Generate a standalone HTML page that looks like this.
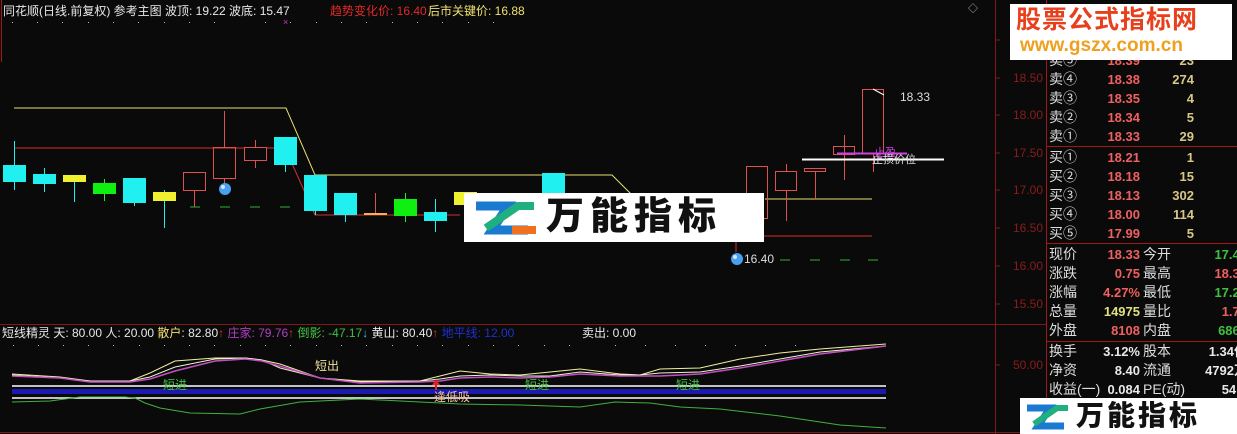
<!DOCTYPE html><html><head><meta charset="utf-8"><style>
body{margin:0;width:1237px;height:434px;background:#0a0a0a;overflow:hidden;position:relative;font-family:"Liberation Sans","Noto Sans CJK SC",sans-serif;}
.t{position:absolute;white-space:nowrap;font-size:12px;line-height:14px}
.rp{position:absolute;left:1049px;font-size:14px;line-height:19px;white-space:nowrap;color:#ddd;font-family:"Liberation Sans","Noto Sans CJK SC",sans-serif}
.r{position:absolute;text-align:right;font-weight:bold;font-size:13px}
</style></head><body>
<svg width="1237" height="434" style="position:absolute;left:0;top:0" font-family="Liberation Sans, Noto Sans CJK SC, sans-serif">
<!-- frame lines -->
<line x1="1.5" y1="0" x2="1.5" y2="62" stroke="#a01818"/>
<line x1="995.5" y1="0" x2="995.5" y2="434" stroke="#801818"/>
<line x1="1046.5" y1="0" x2="1046.5" y2="434" stroke="#a01818"/>
<line x1="0" y1="324.5" x2="1047" y2="324.5" stroke="#801818"/>
<line x1="0" y1="432.5" x2="1047" y2="432.5" stroke="#801818"/>
<line x1="1047" y1="146.5" x2="1237" y2="146.5" stroke="#a01818"/>
<line x1="1047" y1="243.5" x2="1237" y2="243.5" stroke="#a01818"/>
<line x1="1047" y1="341.5" x2="1237" y2="341.5" stroke="#a01818"/>
<g stroke="#801818"><line x1="995" y1="40" x2="1000" y2="40"/><line x1="995" y1="78" x2="1000" y2="78"/><line x1="995" y1="115" x2="1000" y2="115"/><line x1="995" y1="153" x2="1000" y2="153"/><line x1="995" y1="190" x2="1000" y2="190"/><line x1="995" y1="228" x2="1000" y2="228"/><line x1="995" y1="266" x2="1000" y2="266"/><line x1="995" y1="304" x2="1000" y2="304"/><line x1="995" y1="365" x2="1000" y2="365"/></g>
<g fill="#8a1c1c" font-size="12"><text x="1013" y="82">18.50</text><text x="1013" y="119">18.00</text><text x="1013" y="157">17.50</text><text x="1013" y="194">17.00</text><text x="1013" y="232">16.50</text><text x="1013" y="270">16.00</text><text x="1013" y="308">15.50</text><text x="1013" y="369">50.00</text></g>
<!-- dots -->
<g fill="#bbb"><rect x="12" y="22" width="1" height="1"/><rect x="37" y="22" width="1" height="1"/><rect x="62" y="22" width="1" height="1"/><rect x="88" y="22" width="1" height="1"/><rect x="113" y="22" width="1" height="1"/><rect x="138" y="22" width="1" height="1"/><rect x="164" y="22" width="1" height="1"/><rect x="189" y="22" width="1" height="1"/><rect x="214" y="22" width="1" height="1"/><rect x="265" y="22" width="1" height="1"/><rect x="290" y="22" width="1" height="1"/><rect x="316" y="22" width="1" height="1"/><rect x="341" y="22" width="1" height="1"/><rect x="366" y="22" width="1" height="1"/><rect x="392" y="22" width="1" height="1"/><rect x="417" y="22" width="1" height="1"/><rect x="442" y="22" width="1" height="1"/><rect x="468" y="22" width="1" height="1"/><rect x="493" y="22" width="1" height="1"/>
<rect x="13" y="345" width="1" height="1"/><rect x="38" y="345" width="1" height="1"/><rect x="63" y="345" width="1" height="1"/><rect x="88" y="345" width="1" height="1"/><rect x="113" y="345" width="1" height="1"/><rect x="139" y="345" width="1" height="1"/><rect x="164" y="345" width="1" height="1"/><rect x="189" y="345" width="1" height="1"/><rect x="214" y="345" width="1" height="1"/><rect x="240" y="345" width="1" height="1"/><rect x="265" y="345" width="1" height="1"/><rect x="290" y="345" width="1" height="1"/><rect x="316" y="345" width="1" height="1"/><rect x="341" y="345" width="1" height="1"/><rect x="366" y="345" width="1" height="1"/><rect x="392" y="345" width="1" height="1"/><rect x="417" y="345" width="1" height="1"/><rect x="442" y="345" width="1" height="1"/><rect x="468" y="345" width="1" height="1"/><rect x="493" y="345" width="1" height="1"/><rect x="518" y="345" width="1" height="1"/><rect x="544" y="345" width="1" height="1"/><rect x="569" y="345" width="1" height="1"/><rect x="615" y="345" width="1" height="1"/><rect x="645" y="345" width="1" height="1"/><rect x="675" y="345" width="1" height="1"/><rect x="705" y="345" width="1" height="1"/><rect x="735" y="345" width="1" height="1"/><rect x="765" y="345" width="1" height="1"/><rect x="795" y="345" width="1" height="1"/></g>
<text x="283" y="25" fill="#c040c0" font-size="9">×</text>
<!-- trend lines -->
<polyline points="14,108 286,108 315,175 612,175 632,195" fill="none" stroke="#e8e070"/>
<line x1="765" y1="199" x2="872" y2="199" stroke="#e8e070"/>
<polyline points="14,148 285,148 315,215 460,215" fill="none" stroke="#d03030"/>
<line x1="736" y1="236" x2="872" y2="236" stroke="#d03030"/>
<line x1="736" y1="230" x2="736" y2="252" stroke="#d03030"/>
<!-- green dashes -->
<g stroke="#30b030"><line x1="190" y1="207" x2="200" y2="207"/><line x1="220" y1="207" x2="230" y2="207"/><line x1="250" y1="207" x2="260" y2="207"/><line x1="280" y1="207" x2="290" y2="207"/><line x1="780" y1="260" x2="790" y2="260"/><line x1="810" y1="260" x2="820" y2="260"/><line x1="840" y1="260" x2="850" y2="260"/><line x1="868" y1="260" x2="878" y2="260"/></g>
<!-- candles -->
<g stroke-width="1">
<line x1="14.5" y1="141" x2="14.5" y2="190" stroke="#20f0f0"/><rect x="3" y="165" width="23" height="17" fill="#20f0f0"/>
<line x1="44.5" y1="168" x2="44.5" y2="192" stroke="#20f0f0"/><rect x="33" y="174" width="23" height="10" fill="#20f0f0"/>
<line x1="74.5" y1="175" x2="74.5" y2="202" stroke="#20f0f0"/><rect x="63" y="175" width="23" height="7" fill="#f0f030"/>
<line x1="104.5" y1="179" x2="104.5" y2="201" stroke="#20f020"/><rect x="93" y="183" width="23" height="11" fill="#10f010"/>
<line x1="134.5" y1="178" x2="134.5" y2="206" stroke="#20f0f0"/><rect x="123" y="178" width="23" height="25" fill="#20f0f0"/>
<line x1="164.5" y1="190" x2="164.5" y2="228" stroke="#20f0f0"/><rect x="153" y="192" width="23" height="9" fill="#f0f030"/>
<line x1="194.5" y1="190" x2="194.5" y2="207" stroke="#e05050"/><rect x="183.5" y="172.5" width="22" height="18" fill="none" stroke="#e05050"/>
<line x1="224.5" y1="111" x2="224.5" y2="147" stroke="#e05050"/><line x1="224.5" y1="179" x2="224.5" y2="185" stroke="#e05050"/><rect x="213.5" y="147.5" width="22" height="31" fill="none" stroke="#e05050"/>
<line x1="255.5" y1="140" x2="255.5" y2="168" stroke="#e05050"/><rect x="244.5" y="147.5" width="22" height="13" fill="#0a0a0a" stroke="#e05050"/>
<line x1="285.5" y1="165" x2="285.5" y2="172" stroke="#20f0f0"/><rect x="274" y="137" width="23" height="28" fill="#20f0f0"/>
<line x1="315.5" y1="175" x2="315.5" y2="215" stroke="#20f0f0"/><rect x="304" y="175" width="23" height="36" fill="#20f0f0"/>
<line x1="345.5" y1="193" x2="345.5" y2="222" stroke="#20f0f0"/><rect x="334" y="193" width="23" height="22" fill="#20f0f0"/>
<line x1="375.5" y1="193" x2="375.5" y2="214" stroke="#e05050"/><rect x="364" y="213" width="23" height="2" fill="#f0b060"/>
<line x1="405.5" y1="193" x2="405.5" y2="222" stroke="#20f020"/><rect x="394" y="199" width="23" height="17" fill="#10f010"/>
<line x1="435.5" y1="199" x2="435.5" y2="232" stroke="#20f0f0"/><rect x="424" y="212" width="23" height="9" fill="#20f0f0"/>
<rect x="454" y="192" width="23" height="13" fill="#f0f030"/>
<rect x="542" y="173" width="23" height="30" fill="#20f0f0"/>
<rect x="746.5" y="166.5" width="21" height="52" fill="none" stroke="#e05050"/>
<line x1="786.5" y1="164" x2="786.5" y2="221" stroke="#e05050"/><rect x="775.5" y="171.5" width="21" height="19" fill="#0a0a0a" stroke="#e05050"/>
<line x1="815.5" y1="171" x2="815.5" y2="199" stroke="#e05050"/><rect x="804.5" y="168.5" width="21" height="3" fill="none" stroke="#e05050"/>
<line x1="844.5" y1="135" x2="844.5" y2="180" stroke="#e05050"/><rect x="833.5" y="146.5" width="21" height="8" fill="none" stroke="#e05050"/>
<line x1="873.5" y1="153" x2="873.5" y2="172" stroke="#e05050"/><rect x="862.5" y="89.5" width="21" height="64" fill="none" stroke="#e05050"/>
</g>
<line x1="802" y1="159.5" x2="944" y2="159.5" stroke="#fff" stroke-width="2"/>
<line x1="837" y1="153.5" x2="907" y2="153.5" stroke="#d040e0" stroke-width="2"/>
<text x="874" y="156" fill="#d040e0" font-size="11">止盈</text>
<text x="872" y="163" fill="#ddd" font-size="11">止损价位</text>
<line x1="873" y1="89" x2="884" y2="95" stroke="#fff"/>
<text x="900" y="101" fill="#ddd" font-size="12">18.33</text>
<circle cx="225" cy="189" r="6" fill="#4aa0f0"/><circle cx="223" cy="187" r="2" fill="#cfe8ff"/>
<circle cx="737" cy="259" r="6" fill="#4aa0f0"/><circle cx="735" cy="257" r="2" fill="#cfe8ff"/>
<text x="744" y="263" fill="#ddd" font-size="12">16.40</text>
<!-- lower panel -->
<line x1="12" y1="386" x2="886" y2="386" stroke="#fff" stroke-width="1.5"/>
<rect x="12" y="389" width="874" height="5" fill="#1a1ab0"/>
<line x1="12" y1="398" x2="886" y2="398" stroke="#fff" stroke-width="1.5"/>
<polyline points="12,402 50,401 80,397 125,397 135,398 145,403 160,408 190,413 240,414 260,409 300,402 360,399 420,402 460,404 520,405 580,407 615,402 650,403 680,407 720,409 780,416 840,425 886,428" fill="none" stroke="#40b040"/>
<polyline points="12,374 60,377 90,381 130,381 150,373 175,361 215,358 245,358 262,360 280,364 320,378 360,381 420,381 440,376 460,371 490,374 520,375 550,372 580,369 620,374 640,375 660,369 700,368 740,359 780,353 820,349 886,344" fill="none" stroke="#f0f0a0"/>
<polyline points="12,375 60,378 90,381 130,381 150,377 175,367 215,359 245,358 262,360 280,368 320,378 360,382 420,381 440,379 460,376 490,375 520,376 550,376 580,372 620,375 640,375 660,373 700,372 740,366 780,359 820,352 886,346" fill="none" stroke="#f0f0d0"/>
<polyline points="12,376 60,378 90,382 130,382 150,379 175,371 215,361 245,359 262,361 290,369 320,378 360,383 420,382 440,381 460,378 490,377 520,378 550,377 580,374 620,376 640,376 660,376 700,374 740,368 780,361 820,354 886,346" fill="none" stroke="#c050c0" stroke-width="1.5"/>
<text x="163" y="389" fill="#40c040" font-size="12">短进</text>
<text x="525" y="389" fill="#40c040" font-size="12">短进</text>
<text x="676" y="389" fill="#40c040" font-size="12">短进</text>
<text x="315" y="370" fill="#f0e0a0" font-size="12">短出</text>
<text x="434" y="401" fill="#f0c0a0" font-size="12">逢低吸</text>
<path d="M436 379 L432 385 L435 385 L435 390 L437 390 L437 385 L440 385 Z" fill="#e02020"/>
</svg>
<div class="t" style="left:3px;top:4px;color:#e8e8e8">同花顺(日线.前复权) 参考主图 波顶: 19.22 波底: 15.47</div>
<div class="t" style="left:330px;top:4px;color:#e02828">趋势变化价: 16.40</div>
<div class="t" style="left:428px;top:4px;color:#f0e070">后市关键价: 16.88</div>
<div class="t" style="left:968px;top:3px;color:#bbb;font-size:10px">◇</div>
<div class="t" style="left:2px;top:326px;color:#e8e8e8">短线精灵 天: 80.00 人: 20.00 <span style="color:#f0e070">散户</span>: 82.80<span style="color:#e03030">↑</span> <span style="color:#b040c0">庄家: 79.76</span><span style="color:#e03030">↑</span> <span style="color:#40c040">倒影: -47.17</span><span style="color:#40c0e0">↓</span> 黄山: 80.40<span style="color:#e03030">↑</span> <span style="color:#2030d0">地平线: 12.00</span></div>
<div class="t" style="left:582px;top:326px;color:#e8e8e8">卖出: 0.00</div>
<!-- right panel -->
<div style="position:absolute;left:1047px;top:60px;width:190px;height:374px;font-size:14px">
<div class="rp" style="left:2px;top:-9px">卖⑤<br>卖④<br>卖③<br>卖②<br>卖①</div>
<div class="rp" style="left:2px;top:88px">买①<br>买②<br>买③<br>买④<br>买⑤</div>
<div class="r" style="left:40px;width:53px;top:-9px;line-height:19px;color:#f06060">18.39<br>18.38<br>18.35<br>18.34<br>18.33</div>
<div class="r" style="left:100px;width:47px;top:-9px;line-height:19px;color:#d8c888">23<br>274<br>4<br>5<br>29</div>
<div class="r" style="left:40px;width:53px;top:88px;line-height:19px;color:#f06060">18.21<br>18.18<br>18.13<br>18.00<br>17.99</div>
<div class="r" style="left:100px;width:47px;top:88px;line-height:19px;color:#d8c888">1<br>15<br>302<br>114<br>5</div>
<div class="rp" style="left:2px;top:185px">现价<br>涨跌<br>涨幅<br>总量<br>外盘</div>
<div class="r" style="left:30px;width:63px;top:185px;line-height:19px;color:#f06060">18.33<br>0.75<br>4.27%<br><span style="color:#e0e080">14975</span><br>8108</div>
<div class="rp" style="left:96px;top:185px">今开<br>最高<br>最低<br>量比<br>内盘</div>
<div class="r" style="left:140px;width:60px;top:185px;line-height:19px;color:#40c040">17.49<br><span style="color:#f06060">18.33</span><br>17.25<br><span style="color:#f06060">1.78</span><br>6867</div>
<div class="rp" style="left:2px;top:282px">换手<br>净资<br>收益(一)</div>
<div class="r" style="left:30px;width:63px;top:282px;line-height:19px;color:#e8e8e8">3.12%<br>8.40<br>0.084</div>
<div class="rp" style="left:96px;top:282px">股本<br>流通<br>PE(动)</div>
<div class="r" style="left:140px;width:60px;top:282px;line-height:19px;color:#e8e8e8">1.34亿<br>4792万<br>54.8</div>
</div>
<!-- watermark top right -->
<div style="position:absolute;left:1010px;top:4px;width:222px;height:56px;background:#fff"></div>
<div class="t" style="left:1016px;top:6px;font-size:25px;line-height:28px;font-weight:bold;color:#e8401c;letter-spacing:1px">股票公式指标网</div>
<div class="t" style="left:1020px;top:36px;font-size:19px;line-height:20px;font-weight:bold;color:#f0a020">www.gszx.com.cn</div>
<!-- center watermark -->
<div style="position:absolute;left:464px;top:193px;width:300px;height:49px;background:#fff"></div>
<svg width="70" height="40" style="position:absolute;left:472px;top:198px"><path d="M4 8 L36 8 L20 32 L56 32" fill="none" stroke="#1a7ad0" stroke-width="9"/><path d="M14 30 L46 8 L62 8" fill="none" stroke="#20b080" stroke-width="8"/><path d="M40 32 L64 32" stroke="#f07020" stroke-width="8"/></svg>
<div class="t" style="left:546px;top:196px;font-size:38px;line-height:42px;font-weight:900;color:#111;letter-spacing:6px">万能指标</div>
<!-- bottom watermark -->
<div style="position:absolute;left:1020px;top:398px;width:217px;height:36px;background:#fff"></div>
<svg width="48" height="30" style="position:absolute;left:1024px;top:402px"><path d="M3 6 L26 6 L14 24 L40 24" fill="none" stroke="#1a7ad0" stroke-width="7"/><path d="M10 22 L33 6 L44 6" fill="none" stroke="#20b080" stroke-width="6"/></svg>
<div class="t" style="left:1076px;top:400px;font-size:28px;line-height:32px;font-weight:900;color:#111;letter-spacing:3px">万能指标</div>
</body></html>
